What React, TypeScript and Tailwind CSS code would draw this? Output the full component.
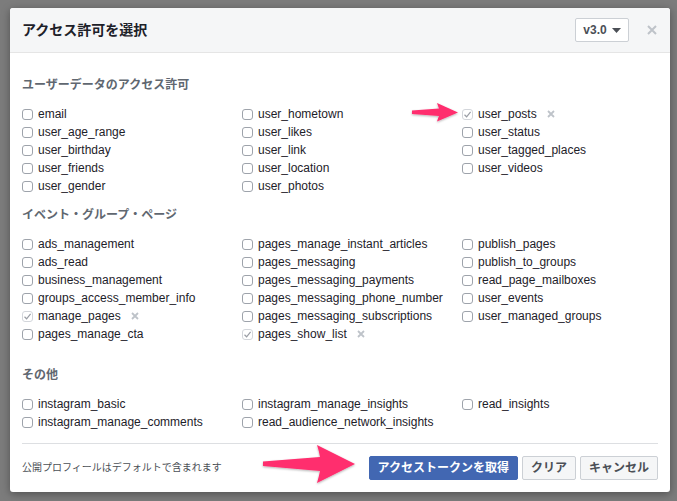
import React from "react";

type Item = { name: string; checked?: boolean };

const s1: Item[][] = [
  [{ name: "email" }, { name: "user_age_range" }, { name: "user_birthday" }, { name: "user_friends" }, { name: "user_gender" }],
  [{ name: "user_hometown" }, { name: "user_likes" }, { name: "user_link" }, { name: "user_location" }, { name: "user_photos" }],
  [{ name: "user_posts", checked: true }, { name: "user_status" }, { name: "user_tagged_places" }, { name: "user_videos" }],
];
const s2: Item[][] = [
  [{ name: "ads_management" }, { name: "ads_read" }, { name: "business_management" }, { name: "groups_access_member_info" }, { name: "manage_pages", checked: true }, { name: "pages_manage_cta" }],
  [{ name: "pages_manage_instant_articles" }, { name: "pages_messaging" }, { name: "pages_messaging_payments" }, { name: "pages_messaging_phone_number" }, { name: "pages_messaging_subscriptions" }, { name: "pages_show_list", checked: true }],
  [{ name: "publish_pages" }, { name: "publish_to_groups" }, { name: "read_page_mailboxes" }, { name: "user_events" }, { name: "user_managed_groups" }],
];
const s3: Item[][] = [
  [{ name: "instagram_basic" }, { name: "instagram_manage_comments" }],
  [{ name: "instagram_manage_insights" }, { name: "read_audience_network_insights" }],
  [{ name: "read_insights" }],
];

function Row({ item }: { item: Item }) {
  return (
    <div className="flex items-center h-[18px]">
      {item.checked ? (
        <div className="w-[11px] h-[11px] mr-[5px] rounded-[3px] border border-[#d3d6db] bg-white flex items-center justify-center">
          <svg width="9" height="9" viewBox="0 0 9 9">
            <path d="M1.5 4.8 L3.6 6.8 L7.6 1.8" fill="none" stroke="#9a9ea5" strokeWidth="1.2" />
          </svg>
        </div>
      ) : (
        <div className="w-[11px] h-[11px] mr-[5px] rounded-[3px] border border-[#9ea3ab] bg-white" />
      )}
      <span className="text-[12px] leading-[18px] text-[#1d2129]">{item.name}</span>
      {item.checked && (
        <svg className="ml-[10px]" width="8" height="8" viewBox="0 0 8 8">
          <path d="M1 1 L7 7 M7 1 L1 7" stroke="#bec3c9" strokeWidth="1.8" />
        </svg>
      )}
    </div>
  );
}

function Grid({ cols }: { cols: Item[][] }) {
  return (
    <div className="grid grid-cols-[220px_220px_1fr]">
      {cols.map((c, i) => (
        <div key={i} className="flex flex-col">
          {c.map((it) => (
            <Row key={it.name} item={it} />
          ))}
        </div>
      ))}
    </div>
  );
}

function Heading({ children }: { children: React.ReactNode }) {
  return <div className="text-[12px] leading-[16px] font-bold text-[#606770] mb-[12px]">{children}</div>;
}

export default function App() {
  return (
    <div
      className="relative w-[677px] h-[501px] bg-[#7c7c7c] pt-[8px] pl-[10px] overflow-hidden"
      style={{ fontFamily: "'Liberation Sans', 'Noto Sans CJK JP', sans-serif" }}
    >
      <div className="w-[660px] h-[484px] bg-white rounded-[3px] shadow-[0_2px_8px_rgba(0,0,0,0.35)] flex flex-col overflow-hidden">
        <div className="h-[45px] bg-[#f5f6f7] border-b border-[#e5e5e5] flex items-center justify-between pl-[12px] pr-[13px] shrink-0">
          <div className="text-[14px] font-bold text-[#1d2129]">アクセス許可を選択</div>
          <div className="flex items-center">
            <div className="h-[24px] w-[54px] border border-[#ccd0d5] rounded-[2px] bg-white flex items-center justify-center gap-[5px]">
              <span className="text-[12px] font-bold text-[#4b4f56]">v3.0</span>
              <svg width="9" height="5" viewBox="0 0 9 5">
                <path d="M0 0 L9 0 L4.5 5 Z" fill="#4b4f56" />
              </svg>
            </div>
            <svg className="ml-[18px]" width="10" height="10" viewBox="0 0 10 10">
              <path d="M1 1 L9 9 M9 1 L1 9" stroke="#bec3c9" strokeWidth="2" />
            </svg>
          </div>
        </div>
        <div className="px-[12px] pt-[24px] flex flex-col">
          <Heading>ユーザーデータのアクセス許可</Heading>
          <Grid cols={s1} />
          <div className="mt-[12px]" />
          <Heading>イベント・グループ・ページ</Heading>
          <Grid cols={s2} />
          <div className="mt-[24px]" />
          <Heading>その他</Heading>
          <Grid cols={s3} />
          <div className="mt-[12px] border-t border-[#dddfe2]" />
          <div className="h-[47px] flex items-center justify-between">
            <span className="text-[10px] text-[#4b4f56]">公開プロフィールはデフォルトで含まれます</span>
            <div className="flex items-center gap-[4px]">
              <div className="h-[24px] px-[8px] bg-[#4267b2] border border-[#4267b2] rounded-[2px] text-white text-[12px] font-bold flex items-center">
                アクセストークンを取得
              </div>
              <div className="h-[24px] px-[8px] bg-[#f5f6f7] border border-[#ccd0d5] rounded-[2px] text-[#4b4f56] text-[12px] font-bold flex items-center">
                クリア
              </div>
              <div className="h-[24px] px-[8px] bg-[#f5f6f7] border border-[#ccd0d5] rounded-[2px] text-[#4b4f56] text-[12px] font-bold flex items-center">
                キャンセル
              </div>
            </div>
          </div>
        </div>
      </div>
      <svg className="absolute left-0 top-0 pointer-events-none" width="677" height="501" viewBox="0 0 677 501">
        <defs>
          <filter id="sh" x="-20%" y="-20%" width="140%" height="160%">
            <feDropShadow dx="0" dy="1" stdDeviation="1" floodColor="#000" floodOpacity="0.3" />
          </filter>
        </defs>
        <path
          d="M412 110.5 L439 108.5 Q438 106 437 103 L458 112.5 L437 121.5 Q438 118 439 116 L412 114 Z"
          fill="#ff2d6e"
          filter="url(#sh)"
        />
        <path
          d="M263 461.5 L320 457 Q319 451 317 445 L355 464 L317 483 Q319 476 320 471 L263 466 Z"
          fill="#ff2d6e"
          filter="url(#sh)"
        />
      </svg>
    </div>
  );
}
